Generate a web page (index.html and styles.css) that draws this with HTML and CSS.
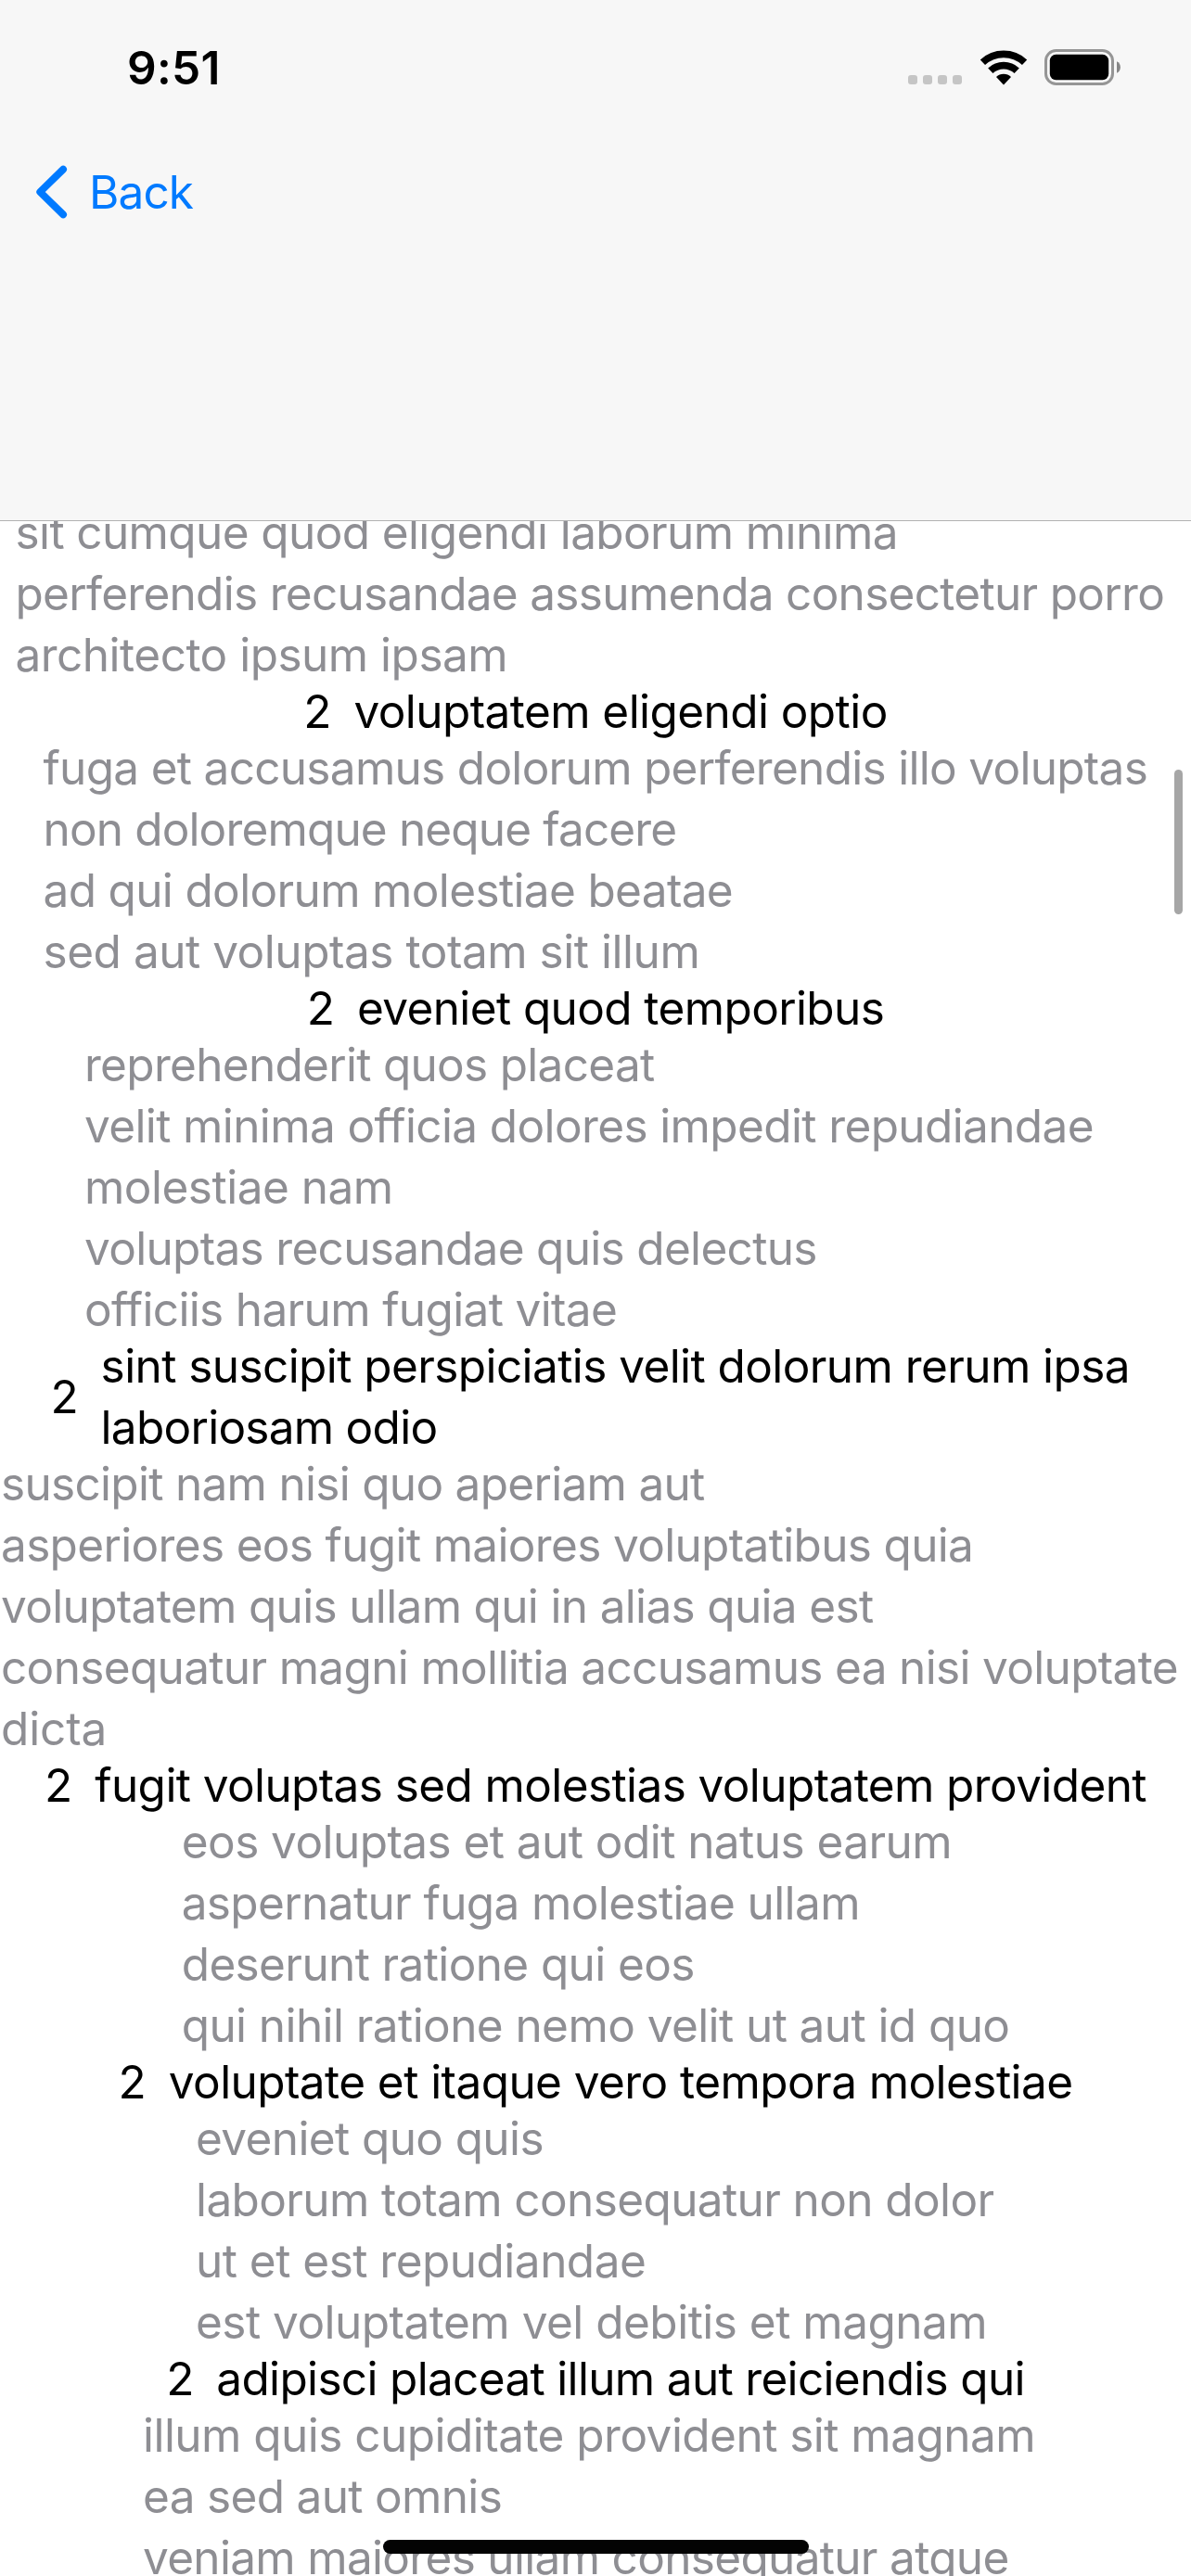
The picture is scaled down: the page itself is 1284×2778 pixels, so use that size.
FILE: index.html
```html
<!DOCTYPE html>
<html lang="la">
<head>
<meta charset="utf-8">
<title>List</title>
<link rel="stylesheet" href="styles.css">
</head>
<body>
<div class="screen">
  <header class="navbar">
    <div class="status">
      <span class="time">9:51</span>
      <div class="indicators">
        <span class="cell"><i></i><i></i><i></i><i></i></span>
        <svg class="wifi" width="52" height="38" viewBox="0 0 52 38">
          <path d="M3.4 13.2A33.2 33.2 0 0 1 48.6 13.2M11.8 22.3A20.8 20.8 0 0 1 40.2 22.3" fill="none" stroke="#000" stroke-width="7.7"/>
          <path d="M26 37.5L18 29A11.7 11.7 0 0 1 34 29Z"/>
        </svg>
        <svg class="battery" width="83" height="39" viewBox="0 0 83 39">
          <rect x="1.5" y="1.5" width="72" height="36" rx="11" fill="none" stroke="#959595" stroke-width="3"/>
          <rect x="5.8" y="5.8" width="63.4" height="27.4" rx="6.5"/>
          <path d="M78 13.3C83.2 15.2 83.2 23.8 78 25.7Z" fill="#868686"/>
        </svg>
      </div>
    </div>
    <a class="back">
      <svg width="36" height="60" viewBox="0 0 36 60"><path d="M31.1 5.6L6.2 30L31.1 54.4" fill="none" stroke="#007aff" stroke-width="7.8" stroke-linecap="round" stroke-linejoin="round"/></svg>
      <span>Back</span>
    </a>
  </header>

  <main class="list">
    <div class="detail d1">
      <p class="k61">sit cumque quod eligendi laborum minima</p>
      <p class="k70">perferendis recusandae assumenda consectetur porro</p>
      <p class="k51">architecto ipsum ipsam</p>
    </div>
    <div class="item"><span>2</span><div class="k57"><p>voluptatem eligendi optio</p></div></div>
    <div class="detail d2">
      <p class="k70">fuga et accusamus dolorum perferendis illo voluptas</p>
      <p class="k85">non doloremque neque facere</p>
      <p class="k65">ad qui dolorum molestiae beatae</p>
      <p class="k46">sed aut voluptas totam sit illum</p>
    </div>
    <div class="item"><span>2</span><div class="k61"><p>eveniet quod temporibus</p></div></div>
    <div class="detail d3">
      <p class="k70">reprehenderit quos placeat</p>
      <p class="k62">velit minima officia dolores impedit repudiandae</p>
      <p class="k51">molestiae nam</p>
      <p class="k68">voluptas recusandae quis delectus</p>
      <p class="k65">officiis harum fugiat vitae</p>
    </div>
    <div class="item"><span>2</span><div class="wide"><p class="k58">sint suscipit perspiciatis velit dolorum rerum ipsa</p><p class="k73">laboriosam odio</p></div></div>
    <div class="detail d4">
      <p class="k70">suscipit nam nisi quo aperiam aut</p>
      <p class="k66">asperiores eos fugit maiores voluptatibus quia</p>
      <p class="k66">voluptatem quis ullam qui in alias quia est</p>
      <p class="k66">consequatur magni mollitia accusamus ea nisi voluptate</p>
      <p class="k12">dicta</p>
    </div>
    <div class="item"><span>2</span><div class="k60"><p>fugit voluptas sed molestias voluptatem provident</p></div></div>
    <div class="detail d5">
      <p class="k55">eos voluptas et aut odit natus earum</p>
      <p class="k62">aspernatur fuga molestiae ullam</p>
      <p class="k62">deserunt ratione qui eos</p>
      <p class="k58">qui nihil ratione nemo velit ut aut id quo</p>
    </div>
    <div class="item"><span>2</span><div class="k57"><p>voluptate et itaque vero tempora molestiae</p></div></div>
    <div class="detail d6">
      <p class="k61">eveniet quo quis</p>
      <p class="k61">laborum totam consequatur non dolor</p>
      <p class="k51">ut et est repudiandae</p>
      <p class="k51">est voluptatem vel debitis et magnam</p>
    </div>
    <div class="item"><span>2</span><div class="k67"><p>adipisci placeat illum aut reiciendis qui</p></div></div>
    <div class="detail d7">
      <p class="k53">illum quis cupiditate provident sit magnam</p>
      <p class="k67">ea sed aut omnis</p>
      <p class="k68">veniam maiores ullam consequatur atque</p>
    </div>
  </main>

  <div class="scrollbar"></div>
  <div class="home"></div>
</div>
</body>
</html>
```
FILE: styles.css
```css
* { box-sizing: border-box; margin: 0; padding: 0; }
body { background: #fff; }
.screen {
  position: relative;
  width: 1284px;
  height: 2778px;
  overflow: hidden;
  background: #fff;
  font-family: Inter, "Liberation Sans", sans-serif;
  font-size: 49.5px;
  line-height: 66px;
  color: #000;
}

/* Status bar and navigation */
.navbar {
  position: relative;
  z-index: 1;
  height: 562px;
  background: #f7f7f7;
  border-bottom: 1px solid #b2b2b2;
}
.status {
  display: flex;
  justify-content: space-between;
  padding: 40px 75px 0 137px;
  height: 174px;
}
.time { font-weight: 600; letter-spacing: .3px; }
.indicators { display: flex; height: 66px; padding-top: 13px; }
.cell { display: flex; gap: 6px; padding-top: 28px; margin-right: 18.7px; }
.cell i { width: 10px; height: 10px; border-radius: 3px; background: #c5c5c5; }
.wifi { flex: none; margin-top: 1px; }
.battery { flex: none; margin-left: 18.3px; }
.back {
  display: flex;
  align-items: center;
  gap: 23px;
  width: 240px;
  height: 66px;
  padding-left: 37px;
  color: #007aff;
  letter-spacing: -.9px;
}

/* Centred rows and their indented details */
.list { margin-top: -21px; white-space: nowrap; }
.detail { color: #8e8e93; margin-bottom: -5px; }
.item {
  display: flex;
  justify-content: center;
  align-items: center;
  gap: 24px;
  margin-bottom: -5px;
}
.wide { width: 1121px; }
.d1 { padding-left: 16.5px; }
.d2 { padding-left: 46.5px; }
.d3 { padding-left: 91px; }
.d4 { padding-left: 1px; }
.d5 { padding-left: 195.7px; }
.d6 { padding-left: 211px; }
.d7 { padding-left: 154px; }

/* Line tracking, in hundredths of a pixel */
.k12 { letter-spacing: -.12px; }
.k46 { letter-spacing: -.46px; }
.k51 { letter-spacing: -.51px; }
.k53 { letter-spacing: -.53px; }
.k55 { letter-spacing: -.55px; }
.k57 { letter-spacing: -.57px; }
.k58 { letter-spacing: -.58px; }
.k60 { letter-spacing: -.6px; }
.k61 { letter-spacing: -.61px; }
.k62 { letter-spacing: -.62px; }
.k65 { letter-spacing: -.65px; }
.k66 { letter-spacing: -.66px; }
.k67 { letter-spacing: -.67px; }
.k68 { letter-spacing: -.68px; }
.k70 { letter-spacing: -.7px; }
.k73 { letter-spacing: -.73px; }
.k85 { letter-spacing: -.85px; }

/* Overlays */
.scrollbar {
  position: absolute;
  left: 1266px;
  top: 830px;
  width: 9px;
  height: 156px;
  border-radius: 5px;
  background: #a6a6a6;
}
.home {
  position: absolute;
  left: 413px;
  top: 2739px;
  width: 459px;
  height: 15px;
  border-radius: 8px;
  background: #030303;
}
```
